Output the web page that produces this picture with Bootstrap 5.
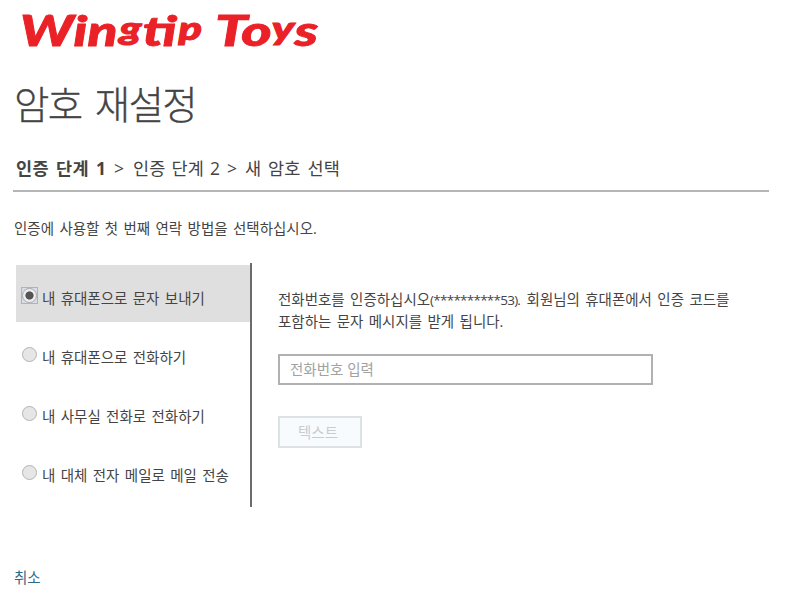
<!DOCTYPE html>
<html lang="ko">
<head>
<meta charset="utf-8">
<meta name="viewport" content="width=device-width, initial-scale=1">
<title>암호 재설정</title>
<link href="https://cdn.jsdelivr.net/npm/bootstrap@5.3.0/dist/css/bootstrap.min.css" rel="stylesheet">
<style>
body{font-family:"Open Sans","Noto Sans CJK KR",sans-serif;font-size:14.5px;line-height:22px;color:#444;word-spacing:1.6px;background:#fff;overflow:hidden}
.page{padding:0 29px 0 13px;height:600px}
.brand{height:56px;margin-left:-13px}
.brand text{font-family:Lato,sans-serif;font-weight:900;font-style:italic;font-size:42px;fill:#ea2127;stroke:#ea2127;stroke-width:.8;word-spacing:0}
.brand .desc{font-size:33px;stroke-width:1}
h1.title{font-size:38.5px;font-weight:300;line-height:50px;letter-spacing:-1.7px;margin:23px 0 0 1px;color:#444;word-spacing:5px;-webkit-text-stroke:.3px #444}
.steps{font-size:17.5px;line-height:26px;margin-top:26px;padding:0 0 9px 3px;border-bottom:2px solid #b5b5b5;word-spacing:1.5px;white-space:nowrap}
.steps .now{width:98px;letter-spacing:.3px;word-spacing:2.4px}.steps .sep{width:19px}.steps .two{width:94px;letter-spacing:.1px}.steps .sep2{width:18px}.steps .three{word-spacing:2px;letter-spacing:.2px}
.intro{margin:26px 0 0 1px}
.methods{width:239px;height:244px;margin-top:23px;padding:2px 0 0 3px;border-right:2px solid #6b6b6b}
.method{height:59px;padding:11px 0 0 6px}
.method label{word-spacing:1.6px;margin-top:12px;white-space:nowrap}
.method.active{background:#dfdfdf;height:57px;margin-bottom:2px}
.method input{appearance:none;width:15px;height:15px;border:1.5px solid #b3b3b3;border-radius:50%;background:#e6e6e6;margin:12px 5px 0 0;flex:none}
.method input:checked{border-color:#aaa;background:radial-gradient(circle,#555 0 3.7px,#eee 4.5px)}
.method .ring{width:17px;height:17px;border:1px solid #a6b1df;background:#d8dbe8;margin:11px 4px 0 -1px;flex:none}
.method .ring input{margin:0;display:block}
.detail{padding:49px 0 0 26px;width:490px}
.detail p{white-space:nowrap}
.digits{font-size:13.5px;letter-spacing:-.75px;margin-right:1px}
.phone{width:375px;height:31px;border:2px solid #b1b1b1;border-radius:0;padding:0 10px;font-size:14.5px;color:#444;margin-top:21px}
.phone::placeholder{color:#a2a2a2;opacity:1}
.send.btn{width:84px;height:32px;border:2px solid #dde2e5;border-radius:0;background:#f7fbfe;color:#c8cccf;font-size:14.5px;line-height:30px;padding:0 4px 0 0;margin-top:31px;opacity:1}
.send.btn:disabled{background:#f7fbfe;border-color:#dde2e5;color:#c8cccf;opacity:1}
.cancel{color:#2f6a84;margin:60px 0 0 1px}
.cancel:hover{color:#1f4f66}
</style>
</head>
<body>
<main class="page d-flex flex-column align-items-stretch">
  <svg class="brand flex-shrink-0" width="340" height="56" role="img" aria-label="Wingtip Toys">
    <text x="20" y="46" textLength="182" lengthAdjust="spacingAndGlyphs">Win<tspan class="desc" dx="1.5" dy="-6">g</tspan><tspan dx="1" dy="6">ti</tspan><tspan class="desc" dx="1.5" dy="-6">p</tspan></text>
    <text x="215" y="46" textLength="103" lengthAdjust="spacingAndGlyphs">To<tspan class="desc" dy="-6">y</tspan><tspan dy="6">s</tspan></text>
  </svg>
  <h1 class="title">암호 재설정</h1>
  <nav class="steps d-flex" aria-label="단계">
    <strong class="now">인증 단계 1</strong><span class="sep">&gt;</span><span class="two">인증 단계 2</span><span class="sep2">&gt;</span><span class="three">새 암호 선택</span>
  </nav>
  <p class="intro">인증에 사용할 첫 번째 연락 방법을 선택하십시오.</p>
  <div class="d-flex">
    <div class="methods flex-shrink-0">
      <div class="method active d-flex align-items-start"><span class="ring"><input type="radio" name="m" id="m1" checked></span><label for="m1">내 휴대폰으로 문자 보내기</label></div>
      <div class="method d-flex align-items-start"><input type="radio" name="m" id="m2"><label for="m2">내 휴대폰으로 전화하기</label></div>
      <div class="method d-flex align-items-start"><input type="radio" name="m" id="m3"><label for="m3">내 사무실 전화로 전화하기</label></div>
      <div class="method d-flex align-items-start"><input type="radio" name="m" id="m4"><label for="m4">내 대체 전자 메일로 메일 전송</label></div>
    </div>
    <div class="detail">
      <p class="mb-0">전화번호를 인증하십시오<span class="digits">(**********53).</span> 회원님의 휴대폰에서 인증 코드를<br>포함하는 문자 메시지를 받게 됩니다.</p>
      <input class="phone form-control" type="text" placeholder="전화번호 입력">
      <button class="send btn" type="button" disabled>텍스트</button>
    </div>
  </div>
  <div><a class="cancel d-inline-block text-decoration-none" href="#">취소</a></div>
</main>
<script src="https://cdn.jsdelivr.net/npm/bootstrap@5.3.0/dist/js/bootstrap.bundle.min.js"></script>
</body>
</html>
